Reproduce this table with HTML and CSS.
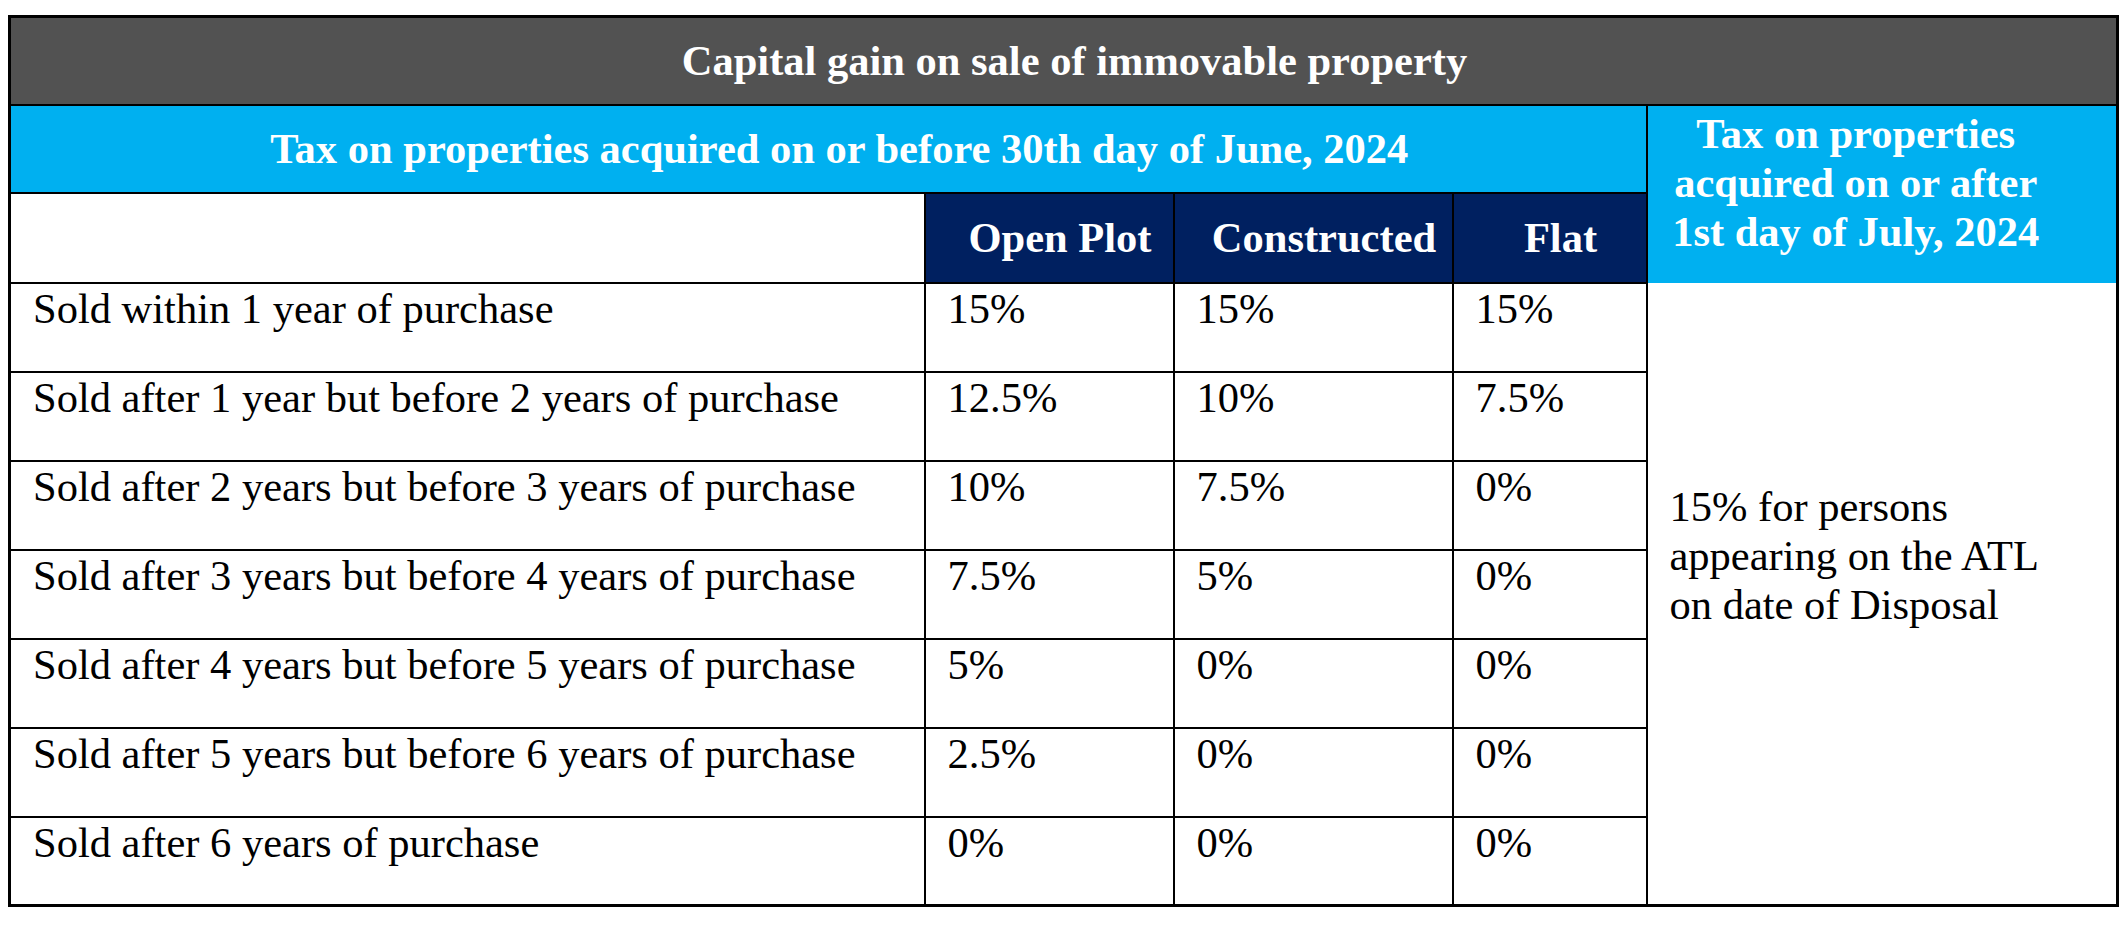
FILE: index.html
```html
<!DOCTYPE html>
<html lang="en">
<head>
<meta charset="utf-8">
<title>Capital gain on sale of immovable property</title>
<link rel="stylesheet" href="styles.css">
</head>
<body>
<div class="page">
  <table class="tax">
    <colgroup>
      <col class="c-label">
      <col class="c-plot">
      <col class="c-cons">
      <col class="c-flat">
      <col class="c-new">
    </colgroup>
    <tr class="r-title">
      <th colspan="5" class="title">Capital gain on sale of immovable property</th>
    </tr>
    <tr class="r-sub">
      <th colspan="4" class="sub">Tax on properties acquired on or before 30th day of June, 2024</th>
      <th rowspan="2" class="sub sub-new">Tax on properties<br>acquired on or after<br>1st day of July, 2024</th>
    </tr>
    <tr class="r-head">
      <td class="blank"></td>
      <th class="navy">Open Plot</th>
      <th class="navy">Constructed</th>
      <th class="navy">Flat</th>
    </tr>
    <tr class="r-data">
      <td>Sold within 1 year of purchase</td>
      <td>15%</td>
      <td>15%</td>
      <td>15%</td>
      <td rowspan="7" class="rate">15% for persons<br>appearing on the ATL<br>on date of Disposal</td>
    </tr>
    <tr class="r-data">
      <td>Sold after 1 year but before 2 years of purchase</td>
      <td>12.5%</td>
      <td>10%</td>
      <td>7.5%</td>
    </tr>
    <tr class="r-data">
      <td>Sold after 2 years but before 3 years of purchase</td>
      <td>10%</td>
      <td>7.5%</td>
      <td>0%</td>
    </tr>
    <tr class="r-data">
      <td>Sold after 3 years but before 4 years of purchase</td>
      <td>7.5%</td>
      <td>5%</td>
      <td>0%</td>
    </tr>
    <tr class="r-data">
      <td>Sold after 4 years but before 5 years of purchase</td>
      <td>5%</td>
      <td>0%</td>
      <td>0%</td>
    </tr>
    <tr class="r-data">
      <td>Sold after 5 years but before 6 years of purchase</td>
      <td>2.5%</td>
      <td>0%</td>
      <td>0%</td>
    </tr>
    <tr class="r-data">
      <td>Sold after 6 years of purchase</td>
      <td>0%</td>
      <td>0%</td>
      <td>0%</td>
    </tr>
  </table>
</div>
</body>
</html>
```

FILE: styles.css
```css
html, body {
  margin: 0;
  padding: 0;
  background: #ffffff;
}

.page {
  padding: 15px 0 0 8px;
}

.tax {
  border-collapse: collapse;
  table-layout: fixed;
  width: 2111px;
  border: 3px solid #000;
  font-family: "Liberation Serif", "Times New Roman", serif;
  font-size: 42.5px;
  line-height: 49px;
  color: #000;
}

.c-label { width: 915px; }
.c-plot { width: 249px; }
.c-cons { width: 279px; }
.c-flat { width: 194px; }
.c-new { width: 471px; }

.tax th,
.tax td {
  border: 2px solid #000;
  padding: 0 0 0 22px;
  text-align: left;
  vertical-align: top;
  white-space: nowrap;
  font-weight: normal;
}

.tax th {
  font-weight: bold;
  color: #ffffff;
  text-align: center;
  vertical-align: middle;
}

.r-title { height: 88px; }
.r-sub { height: 88px; }
.r-head { height: 90px; }
.r-data { height: 89px; }

.tax .title {
  background: #525252;
}

.tax .sub {
  background: #00b0f0;
}

.tax .sub-new {
  padding: 0 52px 24px 0;
  border-bottom-style: hidden;
}

.tax .navy {
  background: #002060;
}

.tax .blank {
  background: #ffffff;
}

.tax .rate {
  vertical-align: middle;
  padding: 0 0 75px 22px;
  border-top-style: hidden;
}
```
